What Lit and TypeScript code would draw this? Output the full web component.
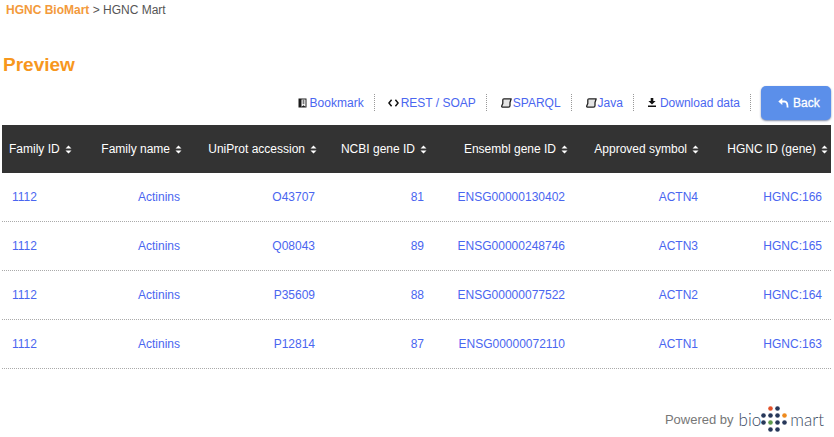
import { LitElement, html, css, svg } from "lit";
import { customElement } from "lit/decorators.js";

const heads = ["Family ID", "Family name", "UniProt accession", "NCBI gene ID", "Ensembl gene ID", "Approved symbol", "HGNC ID (gene)"];
const rows = [
  ["1112", "Actinins", "O43707", "81", "ENSG00000130402", "ACTN4", "HGNC:166"],
  ["1112", "Actinins", "Q08043", "89", "ENSG00000248746", "ACTN3", "HGNC:165"],
  ["1112", "Actinins", "P35609", "88", "ENSG00000077522", "ACTN2", "HGNC:164"],
  ["1112", "Actinins", "P12814", "87", "ENSG00000072110", "ACTN1", "HGNC:163"],
];
const sort = html`<svg class="sort" width="7" height="9" viewBox="0 0 7 9"><path d="M3.5 0.5 L6.5 3.6 H0.5 Z M3.5 8.5 L6.5 5.4 H0.5 Z" fill="#fff"/></svg>`;
const book = html`<svg class="ic" width="9" height="10" viewBox="0 0 9 10"><path d="M0.5 0.5H8.5V9.5H0.5Z" fill="#1c1c1c"/><path d="M3.5 1.5H7.5V8.8L5.5 7.2L3.5 8.8Z" fill="#fff"/><path d="M4.6 1.5H6.4V6.2H4.6Z" fill="#777"/></svg>`;
const code = html`<svg class="ic code" width="11" height="8" viewBox="0 0 11 8" fill="none" stroke="#111" stroke-width="1.5"><path d="M3.6 0.8L0.9 4L3.6 7.2M7.4 0.8L10.1 4L7.4 7.2"/></svg>`;
const scroll = html`<svg class="ic scroll" width="11" height="10" viewBox="0 0 11 10"><path d="M3 0.8H10.2L9 4.5V7.5Q9 9.2 7.5 9.2H1.4Q0.4 9.2 0.8 7.8L1.8 5.5V2.2Q1.8 0.8 3 0.8Z" fill="#e4e4e4" stroke="#222" stroke-width="1.3" stroke-linejoin="round"/></svg>`;
const dl = html`<svg class="ic dl" width="8" height="9" viewBox="0 0 8 9"><path d="M2.7 0H5.3V3H7.6L4 6.5L0.4 3H2.7Z M0 7.6H8V9H0Z" fill="#111"/></svg>`;
const back = html`<svg class="bk" width="11" height="10" viewBox="0 0 11 10" fill="none"><path d="M0.3 3.5L4.3 0V7Z" fill="#fff"/><path d="M4 3.5H6.5Q9.6 3.5 9.6 9.5" stroke="#fff" stroke-width="1.8"/></svg>`;
const N = "#27385a", O = "#ee8a1d", R = "#e2512a", G = "#5c9a49";
const dots: [number, number, string][] = [
  [7, 0, R], [14, 0, N],
  [0, 7, N], [7, 7, N], [14, 7, N], [21, 7, O],
  [0, 14, N], [7, 14, G], [14, 14, N], [21, 14, N],
  [7, 21, N], [14, 21, N],
];
const logoDots = html`<svg class="dots" width="26" height="26" viewBox="-2.5 -2.5 26 26">${dots.map(([x, y, c]) => svg`<circle cx=${x} cy=${y} r="2.3" fill=${c}/>`)}</svg>`;

@customElement("app-root")
export class AppRoot extends LitElement {
  static styles = css`
    :host { display: block; width: 834px; height: 437px; overflow: hidden; background: #fff; font-family: "Liberation Sans", Arial, sans-serif; font-size: 12px; color: #555; }
    .crumb { padding: 3px 0 0 6px; height: 14px; line-height: 14px; }
    .crumb b { color: #f39a3c; }
    h1 { margin: 37px 0 0; padding: 0 0 0 3px; font-size: 19px; line-height: 22px; color: #f7971d; font-weight: 700; }
    .tools { display: flex; justify-content: flex-end; align-items: flex-start; height: 39px; margin-top: 10px; padding-right: 3px; }
    .tool { display: flex; align-items: center; gap: 3px; height: 17px; margin-top: 8px; color: #4a66f0; border-right: 1px dotted #999; padding: 0 10px 0 14px; }
    .ic { flex: none; }
    .code { margin: 0 -1px; }
    .scroll { margin-right: -2px; }
    .dl { margin-right: 1px; }
    .btn { display: flex; align-items: center; gap: 4px; width: 70px; height: 34px; box-sizing: border-box; padding-left: 17px; background: #5b8fea; color: #fff; border-radius: 5px; -webkit-text-stroke: 0.3px #fff; box-shadow: 0 1px 2px rgba(40,60,110,.6); margin-left: 10px; }
    .table { margin: 0 3px 0 2px; }
    .row { display: grid; grid-template-columns: 84px 96px 135px 110px 141px 131px 129px; padding-right: 3px; height: 49px; align-items: center; border-bottom: 1px dotted #aaa; box-sizing: border-box; color: #4a66f0; }
    .head { height: 48px; background: #333; color: #fff; border: 0; font-weight: 500; }
    .th { display: flex; justify-content: flex-end; align-items: center; gap: 5px; white-space: nowrap; }
    .td { text-align: right; white-space: nowrap; }
    .th:first-child { justify-content: flex-start; padding-left: 7px; }
    .td:first-child { text-align: left; padding-left: 10px; }
    .td:nth-child(2) { padding-right: 2px; }
    .td:nth-child(3) { padding-right: 2px; }
    .td:nth-child(4) { padding-right: 3px; }
    .td:nth-child(5) { padding-right: 3px; }
    .td:nth-child(6) { padding-right: 1px; }
    .td:nth-child(7) { padding-right: 6px; }
    .foot { display: flex; justify-content: flex-end; align-items: center; margin-top: 35px; padding-right: 10px; height: 30px; font-size: 13px; color: #777; }
    .logo { display: flex; align-items: center; margin-left: 5px; font-family: Lato, sans-serif; font-weight: 300; font-size: 17px; color: #3a4a63; }
    .dots { margin: 0 3px 0 0; }
  `;
  render() {
    return html`
      <div class="crumb"><b>HGNC BioMart</b> &gt; HGNC Mart</div>
      <h1>Preview</h1>
      <div class="tools">
        <div class="tool">${book}Bookmark</div>
        <div class="tool">${code}REST / SOAP</div>
        <div class="tool">${scroll}SPARQL</div>
        <div class="tool">${scroll}Java</div>
        <div class="tool">${dl}Download data</div>
        <div class="btn">${back}Back</div>
      </div>
      <div class="table">
        <div class="row head">${heads.map((h) => html`<div class="th">${h}${sort}</div>`)}</div>
        ${rows.map((r) => html`<div class="row">${r.map((c) => html`<div class="td">${c}</div>`)}</div>`)}
      </div>
      <div class="foot">Powered by<span class="logo">bio${logoDots}mart</span></div>
    `;
  }
}
